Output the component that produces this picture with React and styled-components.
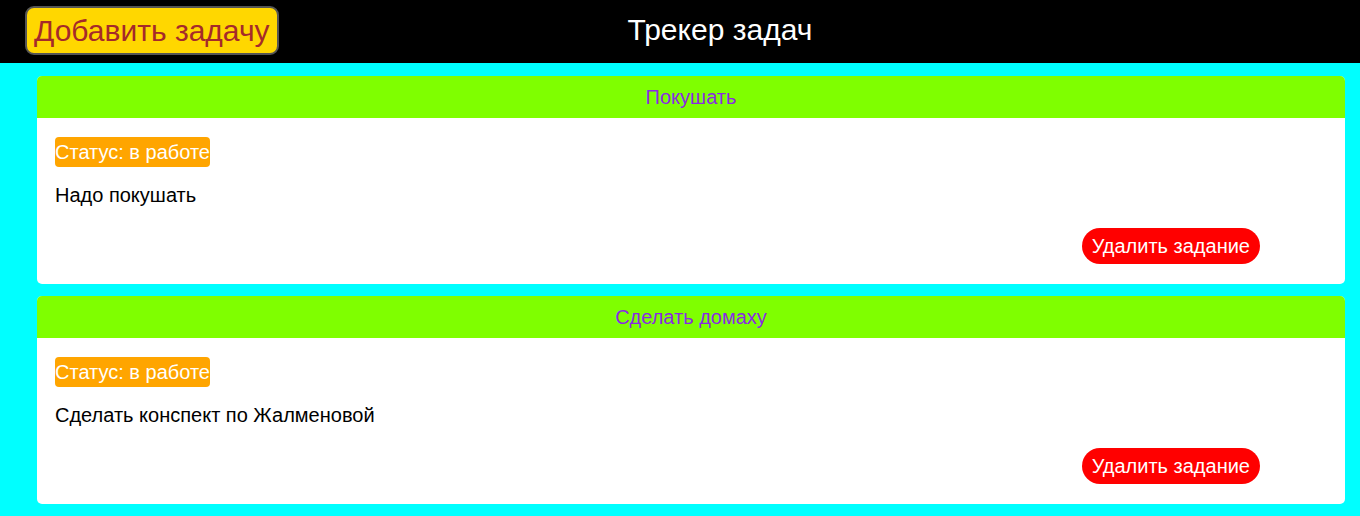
import React from 'react'
import styled, { createGlobalStyle } from 'styled-components';

const GlobalStyle = createGlobalStyle`
  * { box-sizing: border-box; }
  body {
    margin: 0;
    font-family: "Liberation Sans", Arial, sans-serif;
    background: #00ffff;
  }
`;

const tasks = [
  { id: 1, title: 'Покушать', status: 'в работе', text: 'Надо покушать' },
  { id: 2, title: 'Сделать домаху', status: 'в работе', text: 'Сделать конспект по Жалменовой' },
];

const App = () => {
  return (
    <>
      <GlobalStyle />
      <Header>
        <AddButton>Добавить задачу</AddButton>
        <Title>Трекер задач</Title>
      </Header>
      <TaskList>
        {tasks.map(({ id, title, status, text }) => (
          <TaskCard key={id}>
            <TaskTitle>{title}</TaskTitle>
            <TaskBody>
              <Status>Статус: {status}</Status>
              <Description>{text}</Description>
              <DeleteButton>Удалить задание</DeleteButton>
            </TaskBody>
          </TaskCard>
        ))}
      </TaskList>
    </>
  );
};

export default App

const Header = styled.header`
  height: 63px;
  background: #000;
  display: flex;
  align-items: center;
  padding-left: 25px;
  gap: 349px;
`;

const AddButton = styled.button`
  height: 49px;
  margin-top: -2px;
  padding: 0 7px;
  background: #ffd700;
  color: #a52a2a;
  border: 2px solid #555;
  border-radius: 9px;
  font-family: inherit;
  font-size: 30px;
  cursor: pointer;
`;

const Title = styled.h1`
  margin: 0;
  margin-top: -4px;
  color: #fff;
  font-size: 30px;
  font-weight: 400;
`;

const TaskList = styled.main`
  display: flex;
  flex-direction: column;
  gap: 12px;
  padding: 13px 15px 13px 37px;
`;

const TaskCard = styled.section`
  background: #fff;
  border-radius: 5px;
  overflow: hidden;
`;

const TaskTitle = styled.h2`
  margin: 0;
  height: 42px;
  line-height: 42px;
  background: #7fff00;
  color: #8a2be2;
  text-align: center;
  font-size: 20px;
  font-weight: 400;
`;

const TaskBody = styled.div`
  display: flex;
  flex-direction: column;
  align-items: flex-start;
  padding: 19px 18px 20px 18px;
`;

const Status = styled.span`
  height: 30px;
  line-height: 30px;
  background: #ffa500;
  color: #fff;
  border-radius: 4px;
  font-size: 20px;
`;

const Description = styled.p`
  margin: 17px 0 21px;
  line-height: 23px;
  font-size: 20px;
  color: #000;
`;

const DeleteButton = styled.button`
  align-self: flex-end;
  margin-right: 67px;
  height: 36px;
  padding: 0 10px;
  background: #ff0000;
  color: #fff;
  border: none;
  border-radius: 18px;
  font-family: inherit;
  font-size: 20px;
  cursor: pointer;
`;
